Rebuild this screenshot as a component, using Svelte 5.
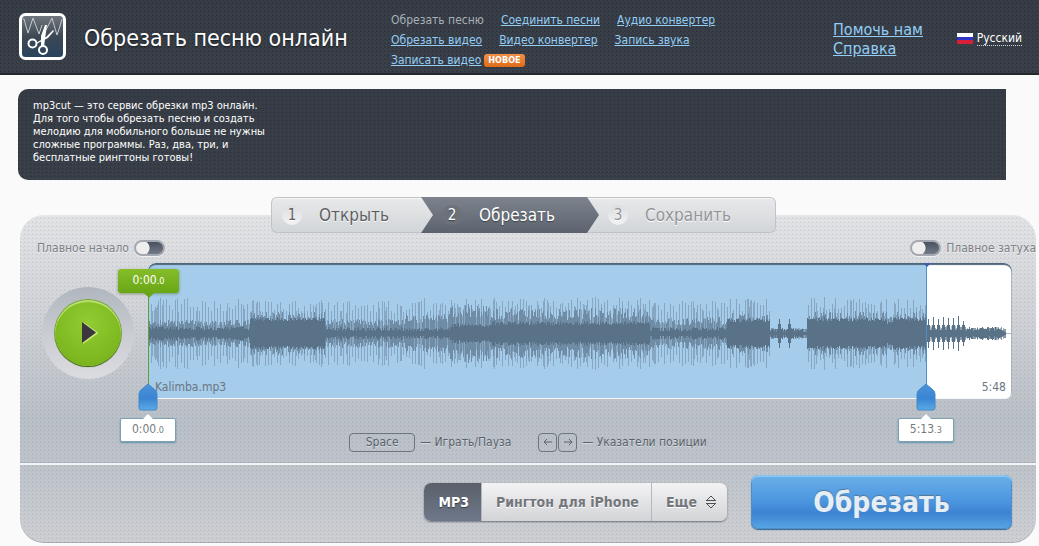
<script>
  const tools = [
    { label: 'Обрезать песню', current: true },
    { label: 'Соединить песни' },
    { label: 'Аудио конвертер' },
    { label: 'Обрезать видео' },
    { label: 'Видео конвертер' },
    { label: 'Запись звука' },
    { label: 'Записать видео', badge: 'НОВОЕ' }
  ];

  const steps = [
    { n: 1, label: 'Открыть', state: 'done' },
    { n: 2, label: 'Обрезать', state: 'active' },
    { n: 3, label: 'Сохранить', state: 'next' }
  ];

  let fadeIn = $state(false);
  let fadeOut = $state(false);
  let format = $state('mp3');

  const duration = 348;
  const end = 313.3;
  const endPercent = (end / duration) * 100;

  // Loudness sections of the track: [from, to, solid core, shaded body, peak]
  const sections = [
    [0, 102, 4, 11, 35],
    [102, 177, 13, 18, 34],
    [177, 257, 3, 12, 33],
    [257, 302, 3, 16, 35],
    [302, 342, 7, 24, 35],
    [342, 502, 9, 21, 36],
    [502, 579, 3, 13, 34],
    [579, 622, 12, 17, 35],
    [622, 659, 2, 4, 5],
    [659, 739, 13, 18, 36],
    [739, 745, 10, 14, 15],
    [745, 778, 13, 18, 36],
    [778, 818, 3, 6, 8],
    [818, 858, 3, 5, 6]
  ];

  function noise(x) {
    const v = Math.sin(x * 127.1 + 11.7) * 43758.5453;
    return v - Math.floor(v);
  }

  function buildWave() {
    let core = '';
    let body = '';
    let peaks = '';
    const bar = (x, h) => {
      const r = Math.max(1, Math.round(h));
      return `M${x} ${70 - r}h1v${2 * r + 1}h-1z`;
    };
    for (const [from, to, c, b, p] of sections) {
      for (let x = from; x < to; x++) {
        const n = noise(x);
        let solid = c + (n - 0.3) * 4;
        let shade = b * (0.6 + 0.6 * noise(x + 900));
        let peak = x % 3 === 0 || n > 0.85 ? p * (0.6 + 0.4 * noise(x + 400)) : shade;
        if (x > 622 && x < 659) {
          const d = Math.min(Math.abs(x - 631), Math.abs(x - 641));
          if (d < 3) solid = 14 - d * 5;
        }
        if (x >= 778 && x < 818) {
          const d = Math.abs(((x - 778) % 5) - 2);
          solid = d === 0 ? 12 + n * 5 : d === 1 ? 8 : 3;
        }
        if (x > 850) solid = Math.max(1, (858 - x) / 2);
        core += bar(x, solid);
        if (noise(x + 70) > 0.2) body += bar(x, Math.max(shade, solid));
        peaks += bar(x, Math.max(peak, solid));
      }
    }
    return { core, body, peaks };
  }

  const wave = buildWave();
</script>

<header class="top">
  <div class="brand">
    <svg class="logo" viewBox="0 0 48 48" aria-hidden="true">
      <defs>
        <linearGradient id="logo-fill" x1="0" y1="0" x2="0" y2="1">
          <stop offset="0" stop-color="#73797f" />
          <stop offset=".5" stop-color="#3d4853" />
          <stop offset="1" stop-color="#26435f" />
        </linearGradient>
      </defs>
      <rect x="1.5" y="1.5" width="44" height="44" rx="5" fill="url(#logo-fill)" stroke="#fff" stroke-width="3" />
      <path d="M4 6h1l4 14 5-15 6 16 3-9M27 17l6-12 5 17 3-9 2-7" fill="none" stroke="#c3cbd1" stroke-width="1" />
      <path d="M22 34L22 23 26 12 28 12 26 26 25 34zM17 30l10-6 7-7 1 1-6 7-12 6z" fill="#fff" />
      <circle cx="13.500" cy="30.500" r="4" fill="none" stroke="#fff" stroke-width="2" />
      <circle cx="24" cy="37" r="4" fill="none" stroke="#fff" stroke-width="2" />
    </svg>
    <h1>Обрезать песню онлайн</h1>
  </div>

  <nav class="tools">
    {#each tools as t}
      <span class="tool">
        {#if t.current}<span>{t.label}</span>{:else}<a href="#tool">{t.label}</a>{/if}
        {#if t.badge}<b class="badge">{t.badge}</b>{/if}
      </span>
    {/each}
  </nav>

  <nav class="help">
    <a href="#donate">Помочь нам</a>
    <a href="#help">Справка</a>
  </nav>

  <button class="language" type="button">
    <i class="flag"></i><span>Русский</span>
  </button>
</header>

<section class="promo">
  <p>mp3cut — это сервис обрезки mp3 онлайн. Для того чтобы обрезать песню и создать мелодию для мобильного больше не нужны сложные программы. Раз, два, три, и бесплатные рингтоны готовы!</p>
</section>

<main>
  <div class="stepbar">
    <ol class="steps">
      {#each steps as s}
        <li class={s.state}><i>{s.n}</i><span>{s.label}</span></li>
      {/each}
    </ol>
  </div>

  <div class="panel">
    <div class="fades">
      <label><span>Плавное начало</span><input type="checkbox" bind:checked={fadeIn} /></label>
      <label><input type="checkbox" bind:checked={fadeOut} /><span>Плавное затуха</span></label>
    </div>

    <div class="editor">
      <div class="playcell">
        <div class="ring">
          <button class="play" type="button" aria-label="Play">
            <svg viewBox="0 0 16 22" aria-hidden="true">
              <path d="M1 1L15 11 1 21" fill="none" stroke="#c5e57b" stroke-width="2" />
              <path d="M0 0L14 10.500 0 21z" fill="#3c363e" />
            </svg>
          </button>
        </div>
      </div>

      <div class="track">
        <div class="screen">
          <div class="selection" style="width: {endPercent}%"></div>
          <svg class="wave" viewBox="0 0 864 136" preserveAspectRatio="none" aria-hidden="true">
            <path d={wave.peaks} opacity=".42" />
            <path d={wave.body} opacity=".5" />
            <path d={wave.core} />
            <path d="M0 70h864v1H0z" opacity=".5" />
          </svg>
          <div class="captions"><span>Kalimba.mp3</span><span>5:48</span></div>
        </div>

        <div class="cursor"><span class="playtime">0:00<small>.0</small></span></div>
        <div class="edge" style="left: {endPercent}%"></div>

        <div class="marker" style="left: 0%">
          <svg viewBox="0 0 20 29" aria-hidden="true"><use href="#grip" /></svg>
          <span class="time">0:00<small>.0</small></span>
        </div>
        <div class="marker" style="left: {endPercent}%">
          <svg viewBox="0 0 20 29" aria-hidden="true">
            <defs>
              <linearGradient id="grip-fill" x1="0" y1="0" x2="0" y2="1">
                <stop offset="0" stop-color="#4c94da" />
                <stop offset=".55" stop-color="#3a84d3" />
                <stop offset="1" stop-color="#5aaae6" />
              </linearGradient>
              <path id="grip" d="M10 1l6 5q3 2 3 5v14q0 2-2 2H3q-2 0-2-2V11q0-3 3-5z" fill="url(#grip-fill)" stroke="#4688c4" stroke-width="1" />
            </defs>
            <use href="#grip" />
          </svg>
          <span class="time">5:13<small>.3</small></span>
        </div>
      </div>
    </div>

    <div class="hints">
      <span><kbd class="wide">Space</kbd> — Играть/Пауза</span>
      <span>
        <kbd><svg viewBox="0 0 10 10" aria-hidden="true"><path d="M9 5H1M4 2L1 5l3 3" /></svg></kbd>
        <kbd><svg viewBox="0 0 10 10" aria-hidden="true"><path d="M1 5h8M6 2l3 3-3 3" /></svg></kbd>
        — Указатели позиции
      </span>
    </div>

    <div class="actions">
      <div class="formats">
        <button type="button" class:on={format === 'mp3'} onclick={() => (format = 'mp3')}>MP3</button>
        <button type="button" class:on={format === 'm4r'} onclick={() => (format = 'm4r')}>Рингтон для iPhone</button>
        <button type="button" class="more">
          Еще
          <svg viewBox="0 0 12 14" aria-hidden="true"><path d="M2 5l4-4 4 4M2 9l4 4 4-4" fill="none" stroke="#4d5157" /><path d="M1 5h10v1H1zM1 8h10v1H1z" /></svg>
        </button>
      </div>
      <button class="cut" type="button">Обрезать</button>
    </div>
  </div>
</main>

<style>
  :global(body) {
    background: #fbfafb;
    font-family: Tahoma, "DejaVu Sans Condensed", "Noto Sans", sans-serif;
    font-size: 12px;
  }

  button {
    font-family: inherit;
    cursor: pointer;
    border: 0;
  }

  .top,
  .promo {
    background-color: #383d46;
    background-image: linear-gradient(45deg, #31363e 25%, transparent 25%, transparent 75%, #31363e 75%),
      linear-gradient(to bottom, #373d46, #3b414a);
    background-size: 4px 4px, 100% 100%;
  }

  .top {
    display: grid;
    grid-template-columns: 372px minmax(330px, 442px) 1fr auto;
    box-sizing: border-box;
    height: 75px;
    padding: 0 17px 0 19px;
    border-bottom: 2px solid #24272b;
  }

  .brand {
    display: flex;
    align-items: center;
    gap: 17px;
    color: #fff;
  }

  .logo {
    width: 48px;
    height: 48px;
  }

  h1 {
    margin: 3px 0 0;
    font-size: 23px;
    font-weight: 400;
    white-space: nowrap;
    text-shadow: 0 1px 2px #16191d;
  }

  .tools {
    display: flex;
    flex-wrap: wrap;
    align-content: flex-start;
    column-gap: 17px;
    max-width: 400px;
    padding-top: 10px;
    line-height: 20px;
    color: #a9afb7;
  }

  .tool {
    display: flex;
    align-items: center;
    gap: 3px;
    white-space: nowrap;
  }

  .top a {
    color: #93cdf5;
  }

  .badge {
    padding: 0 4px;
    border-radius: 3px;
    background: linear-gradient(#f0904a, #df6c17);
    color: #fff;
    font-size: 9px;
    line-height: 13px;
  }

  .help {
    display: flex;
    flex-direction: column;
    align-items: flex-start;
    gap: 1px;
    padding-top: 21px;
    font-size: 16px;
    line-height: 18px;
    white-space: nowrap;
  }

  .language {
    display: flex;
    align-items: center;
    align-self: start;
    gap: 4px;
    margin-top: 31px;
    padding: 0;
    background: none;
    color: #fff;
    font-size: 12px;
    line-height: 14px;
  }

  .language span {
    border-bottom: 1px dotted #d0d4da;
  }

  .flag {
    width: 16px;
    height: 11px;
    background: linear-gradient(#fff 0 4px, #2f35c8 4px 7px, #d91f35 7px);
  }

  .promo {
    box-sizing: border-box;
    min-height: 91px;
    margin: 14px 33px 0 18px;
    padding: 10px 15px;
    border-radius: 10px 0 0 10px;
    color: #fff;
    font-size: 11px;
    line-height: 13px;
  }

  .promo p {
    max-width: 244px;
    margin: 0;
  }

  main {
    margin: 17px 3px 0 20px;
  }

  .stepbar {
    position: relative;
    z-index: 1;
    display: flex;
    justify-content: center;
    padding-right: 9px;
    margin-bottom: -18px;
  }

  .steps {
    display: flex;
    width: 505px;
    height: 36px;
    margin: 0;
    padding: 0;
    border-radius: 6px;
    background: linear-gradient(#e9e9eb, #d1d5d8);
    box-shadow: inset 0 0 0 1px #c0c4c8, inset 0 2px 0 #f6f6f7;
    list-style: none;
    font-size: 17px;
    color: #5d5f63;
    text-shadow: 0 1px 0 #fff;
  }

  .steps li {
    display: flex;
    align-items: center;
    box-sizing: border-box;
    gap: 17px;
  }

  .steps i {
    width: 20px;
    border-radius: 50%;
    background: linear-gradient(#dcdde0, #f3f3f4);
    font-size: 15px;
    font-style: normal;
    line-height: 20px;
    text-align: center;
  }

  .steps .done {
    width: 150px;
    padding-left: 11px;
  }

  .steps .active {
    width: 178px;
    padding-left: 21px;
    background: linear-gradient(#7d838d, #5d636e);
    clip-path: polygon(0 0, 166px 0, 100% 50%, 166px 100%, 0 100%, 12px 50%);
    color: #fff;
    text-shadow: 0 1px 1px #3d424a;
  }

  .steps .active i {
    background: #6c717a;
  }

  .steps .next {
    padding-left: 9px;
    color: #929599;
  }

  .panel {
    overflow: hidden;
    border-radius: 24px;
    background: linear-gradient(45deg, #6f7a8822 25%, transparent 25%, transparent 75%, #6f7a8822 75%) 0 0 / 4px 4px,
      linear-gradient(#e3e4e6 0, #d4d6da 25%, #bac0c7 62%, #bfc5cb 78%, #cfd0d4 100%);
    box-shadow: inset 0 1px 0 #e6e6e7, inset 0 -1px 0 #a9adb3;
  }

  .fades {
    display: flex;
    justify-content: space-between;
    padding: 24px 0 0 17px;
    color: #7d8187;
    line-height: 18px;
    white-space: nowrap;
    text-shadow: 0 1px 0 #eceded;
  }

  .fades label {
    display: flex;
    align-items: center;
    gap: 5px;
  }

  .fades input {
    appearance: none;
    box-sizing: border-box;
    width: 31px;
    height: 16px;
    margin: 0;
    border: 2px solid #a5a9af;
    border-radius: 8px;
    background: radial-gradient(circle at 6px 6px, #eeeeef 7px, transparent 8px), linear-gradient(#4a505d, #737b89);
    box-shadow: 0 1px 0 #f0f0f1;
  }

  .fades input:checked {
    background: radial-gradient(circle at 21px 6px, #eeeeef 7px, transparent 8px), linear-gradient(#6b9f1d, #8cc42e);
  }

  .editor {
    display: flex;
    padding: 6px 24px 0 0;
  }

  .playcell {
    width: 128px;
    padding: 24px 0 0 22px;
    box-sizing: border-box;
  }

  .ring {
    display: grid;
    place-items: center;
    width: 92px;
    height: 92px;
    border-radius: 50%;
    background: linear-gradient(#b0b6be, #c9ccd2 50%, #dbdce0);
  }

  .play {
    display: grid;
    place-items: center;
    width: 66px;
    height: 66px;
    padding: 0 0 0 3px;
    border-radius: 50%;
    background: radial-gradient(circle at 50% 35%, #92cc33, #74ae16);
    box-shadow: inset 0 2px 0 #b5df6a, 0 1px 1px #3d6410, 0 0 0 1px #7aa43b;
  }

  .play svg {
    width: 16px;
    height: 22px;
  }

  .track {
    position: relative;
    flex: 1;
    margin-bottom: 33px;
  }

  .screen {
    position: relative;
    overflow: hidden;
    height: 136px;
    border-radius: 8px 8px 6px 0;
    background: #fff;
  }

  .screen::after {
    content: "";
    position: absolute;
    inset: 0;
    border-radius: inherit;
    box-shadow: inset 0 2px 1px #50667c, inset -1px 0 0 #b7bdc4, inset 0 -1px 0 #f5f8fa;
  }

  .selection {
    height: 100%;
    background: #a5cceb;
  }

  .wave {
    position: absolute;
    inset: 0;
    width: 100%;
    height: 100%;
    fill: #5a7288;
  }

  .captions {
    position: absolute;
    right: 6px;
    bottom: 4px;
    left: 7px;
    display: flex;
    justify-content: space-between;
    color: #6b7680;
    line-height: 16px;
  }

  .cursor {
    position: absolute;
    top: 6px;
    bottom: 12px;
    left: 0;
    border-left: 1px solid #5da03b;
  }

  .edge {
    position: absolute;
    top: 0;
    bottom: 12px;
    border-left: 1px solid #4f8fc4;
  }

  .edge::before {
    content: "";
    position: absolute;
    left: -4px;
    border: solid transparent;
    border-width: 4px 4px 0;
    border-top-color: #3c5fa8;
  }

  .playtime {
    position: absolute;
    left: -31px;
    width: 61px;
    border-radius: 3px;
    background: linear-gradient(#86bd2a, #69a615);
    box-shadow: 0 1px 3px #55752d99;
    color: #fff;
    line-height: 23px;
    text-align: center;
  }

  .playtime::after {
    content: "";
    position: absolute;
    top: 100%;
    left: 26px;
    border: solid transparent;
    border-width: 5px 5px 0;
    border-top-color: #69a615;
  }

  small {
    font-size: 9px;
  }

  .marker {
    position: absolute;
    top: 120px;
    display: flex;
    flex-direction: column;
    align-items: center;
    width: 56px;
    margin-left: -28px;
  }

  .marker svg {
    width: 20px;
    height: 29px;
  }

  .marker .time {
    position: relative;
    box-sizing: border-box;
    width: 56px;
    margin-top: 6px;
    border: 1px solid #7f9fb3;
    border-radius: 2px;
    background: #fff;
    box-shadow: 0 1px 2px #5f93ac;
    color: #777b80;
    line-height: 21px;
    text-align: center;
  }

  .time::before {
    content: "";
    position: absolute;
    bottom: 100%;
    left: 22px;
    border: solid transparent;
    border-width: 0 5px 5px;
    border-bottom-color: #fff;
  }

  .hints {
    display: flex;
    justify-content: center;
    gap: 27px;
    height: 31px;
    color: #5a626b;
    line-height: 20px;
    text-shadow: 0 1px 0 #d6dade;
  }

  .hints span {
    display: flex;
    align-items: center;
    align-self: flex-start;
    gap: 5px;
  }

  kbd {
    display: flex;
    align-items: center;
    justify-content: center;
    box-sizing: border-box;
    width: 19px;
    height: 19px;
    border: 1px solid #6d757e;
    border-radius: 4px;
    font-family: inherit;
    font-size: 12px;
    line-height: 16px;
  }

  kbd + kbd {
    margin-left: -4px;
  }

  .wide {
    width: 66px;
  }

  kbd svg {
    width: 10px;
    height: 10px;
    fill: none;
    stroke: #5a626b;
  }

  .actions {
    display: flex;
    justify-content: flex-end;
    align-items: center;
    gap: 24px;
    box-sizing: border-box;
    height: 80px;
    padding: 0 24px 4px 0;
    border-top: 2px solid #f3f4f5;
    box-shadow: 0 -1px 0 #abb1b8;
  }

  .formats {
    display: flex;
    height: 38px;
    border-radius: 7px;
    background: linear-gradient(#f3f3f4, #d3d4d7);
    box-shadow: 0 1px 2px #6c727a;
  }

  .formats button {
    padding: 0 12px 0 14px;
    border-right: 1px solid #b4b7bc;
    background: none;
    color: #73777c;
    font-size: 14px;
    font-weight: 700;
    text-shadow: 0 1px 0 #fff;
    white-space: nowrap;
  }

  .formats .on {
    border-radius: 7px 0 0 7px;
    padding-left: 14px;
    background: linear-gradient(#596069, #6f788a);
    color: #fff;
    text-shadow: 0 1px 1px #363b43;
  }

  .formats .more {
    display: flex;
    align-items: center;
    gap: 8px;
    padding-right: 10px;
    border: 0;
  }

  .more svg {
    width: 12px;
    height: 14px;
    fill: #4d5157;
  }

  .cut {
    width: 261px;
    height: 54px;
    border-radius: 7px;
    background: linear-gradient(#6bb0e9, #4b95df 50%, #3d83d2 70%, #59a6e4);
    box-shadow: inset 0 2px 0 #8cc5f0, inset 0 0 0 1px #4a90cd, 0 1px 1px #35648f;
    color: #e6eef5;
    font-size: 28px;
    font-weight: 700;
    text-shadow: 0 -1px 1px #54789a;
  }
</style>
